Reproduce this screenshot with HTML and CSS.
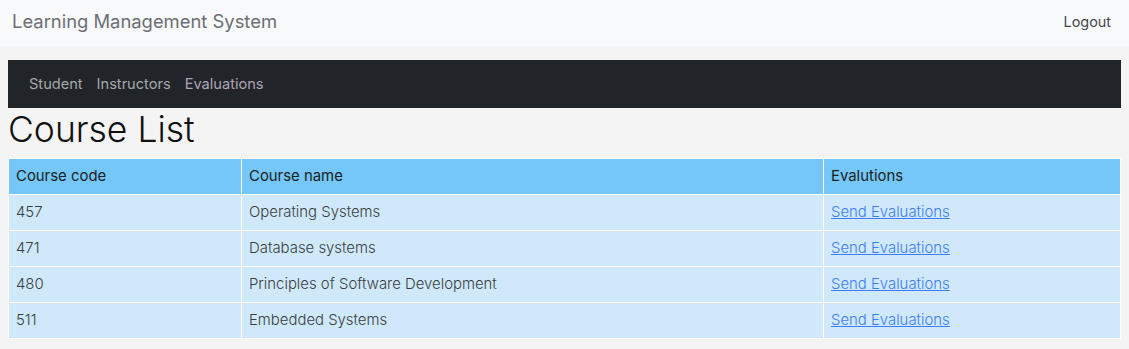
FILE: index.html
```html
<!DOCTYPE html>
<html lang="en">

<head>
  <meta charset="UTF-8">
  <title>Learning Management System</title>
  <link rel="stylesheet" href="styles.css">
</head>

<body>
  <header class="topbar">
    <a class="brand" href="#">Learning Management System</a>
    <a class="logout" href="#">Logout</a>
  </header>

  <main class="page">
    <nav class="menu">
      <a href="#">Student</a>
      <a href="#">Instructors</a>
      <a href="#" class="visited">Evaluations</a>
    </nav>

    <h1>Course List</h1>

    <table class="courses">
      <thead>
        <tr>
          <th class="col-code">Course code</th>
          <th class="col-name">Course name</th>
          <th>Evalutions</th>
        </tr>
      </thead>
      <tbody>
        <tr>
          <td>457</td>
          <td>Operating Systems</td>
          <td><a href="#">Send Evaluations</a></td>
        </tr>
        <tr>
          <td>471</td>
          <td>Database systems</td>
          <td><a href="#">Send Evaluations</a></td>
        </tr>
        <tr>
          <td>480</td>
          <td>Principles of Software Development</td>
          <td><a href="#">Send Evaluations</a></td>
        </tr>
        <tr>
          <td>511</td>
          <td>Embedded Systems</td>
          <td><a href="#">Send Evaluations</a></td>
        </tr>
      </tbody>
    </table>
  </main>
</body>
</html>
```

FILE: styles.css
```css
body {
  margin: 0;
  font-family: Inter, "Open Sans", sans-serif;
  background: #f4f4f4;
  color: #212529;
}

a {
  text-decoration: none;
}

.topbar {
  height: 46px;
  box-sizing: border-box;
  display: flex;
  align-items: center;
  justify-content: space-between;
  padding: 0 18px 4px 12px;
  background: #f8f9fa;
}

.brand {
  font-size: 18.4px;
  color: #6c6f73;
}

.logout {
  font-size: 14.4px;
  color: #45484c;
}

.page {
  padding: 14px 8px 0;
}

.menu {
  height: 48px;
  display: flex;
  align-items: center;
  gap: 14px;
  padding: 0 21px;
  box-sizing: border-box;
  background: #212529;
}

.menu a {
  font-size: 14.6px;
  color: #a6a8ab;
}

.menu a.visited {
  color: #b0a3b8;
}

h1 {
  margin: 1px 0 6px;
  font-size: 35.5px;
  font-weight: 300;
  line-height: 1.2;
  color: #111;
}

.courses {
  width: 100%;
  border-collapse: collapse;
  font-size: 14.9px;
}

.courses th,
.courses td {
  padding: 7px 7px;
  line-height: 21px;
  text-align: left;
  border: 1px solid #fff;
}

.courses th {
  font-weight: 400;
  background: #74c7f8;
  color: #1b1e21;
}

.courses td {
  font-weight: 300;
  background: #cfe9fb;
  color: #3a3d40;
}

.col-code {
  width: 218px;
}

.col-name {
  width: 567px;
}

.courses td a {
  color: #3d7cf5;
  text-decoration: underline;
}
```
